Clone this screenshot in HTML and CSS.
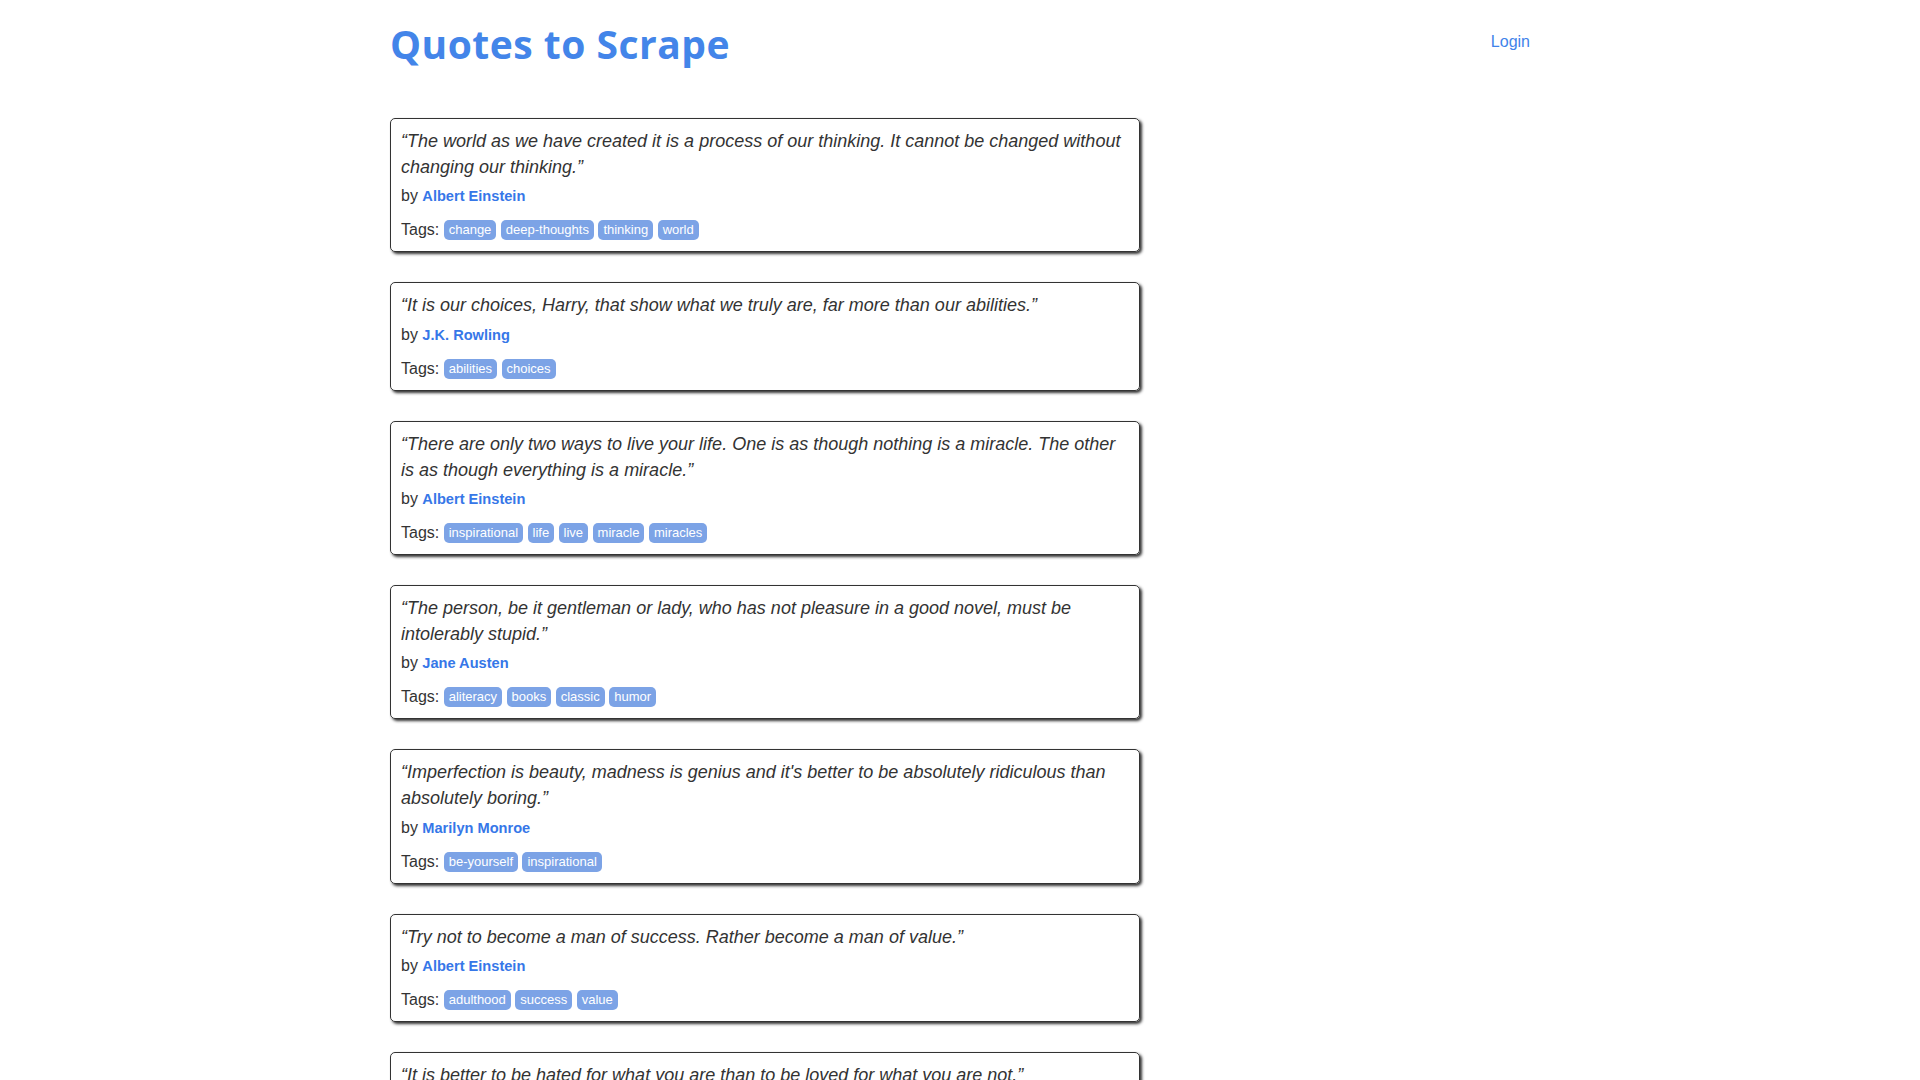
FILE: index.html
```html
<!DOCTYPE html>
<html lang="en">
<head>
<meta charset="utf-8">
<title>Quotes to Scrape</title>
<link rel="stylesheet" href="styles.css">
</head>
<body>
<div class="container">
  <header class="header-box">
    <h1 class="brand"><a href="#">Quotes to Scrape</a></h1>
    <p class="login"><a href="#">Login</a></p>
  </header>
  <main class="quotes">
    <div class="quote">
      <span class="text">“The world as we have created it is a process of our thinking. It cannot be changed without changing our thinking.”</span>
      <span>by <small class="author">Albert Einstein</small></span>
      <div class="tags">Tags: <a class="tag" href="#">change</a> <a class="tag" href="#">deep-thoughts</a> <a class="tag" href="#">thinking</a> <a class="tag" href="#">world</a></div>
    </div>
    <div class="quote">
      <span class="text">“It is our choices, Harry, that show what we truly are, far more than our abilities.”</span>
      <span>by <small class="author">J.K. Rowling</small></span>
      <div class="tags">Tags: <a class="tag" href="#">abilities</a> <a class="tag" href="#">choices</a></div>
    </div>
    <div class="quote">
      <span class="text">“There are only two ways to live your life. One is as though nothing is a miracle. The other is as though everything is a miracle.”</span>
      <span>by <small class="author">Albert Einstein</small></span>
      <div class="tags">Tags: <a class="tag" href="#">inspirational</a> <a class="tag" href="#">life</a> <a class="tag" href="#">live</a> <a class="tag" href="#">miracle</a> <a class="tag" href="#">miracles</a></div>
    </div>
    <div class="quote">
      <span class="text">“The person, be it gentleman or lady, who has not pleasure in a good novel, must be intolerably stupid.”</span>
      <span>by <small class="author">Jane Austen</small></span>
      <div class="tags">Tags: <a class="tag" href="#">aliteracy</a> <a class="tag" href="#">books</a> <a class="tag" href="#">classic</a> <a class="tag" href="#">humor</a></div>
    </div>
    <div class="quote">
      <span class="text">“Imperfection is beauty, madness is genius and it's better to be absolutely ridiculous than absolutely boring.”</span>
      <span>by <small class="author">Marilyn Monroe</small></span>
      <div class="tags">Tags: <a class="tag" href="#">be-yourself</a> <a class="tag" href="#">inspirational</a></div>
    </div>
    <div class="quote">
      <span class="text">“Try not to become a man of success. Rather become a man of value.”</span>
      <span>by <small class="author">Albert Einstein</small></span>
      <div class="tags">Tags: <a class="tag" href="#">adulthood</a> <a class="tag" href="#">success</a> <a class="tag" href="#">value</a></div>
    </div>
    <div class="quote">
      <span class="text">“It is better to be hated for what you are than to be loved for what you are not.”</span>
      <span>by <small class="author">André Gide</small></span>
      <div class="tags">Tags: <a class="tag" href="#">life</a> <a class="tag" href="#">love</a></div>
    </div>
    <div class="quote">
      <span class="text">“I have not failed. I've just found 10,000 ways that won't work.”</span>
      <span>by <small class="author">Thomas A. Edison</small></span>
      <div class="tags">Tags: <a class="tag" href="#">edison</a> <a class="tag" href="#">failure</a> <a class="tag" href="#">inspirational</a> <a class="tag" href="#">paraphrased</a></div>
    </div>
  </main>
</div>
</body>
</html>
```
FILE: styles.css
```css
* {
  box-sizing: border-box;
}

body {
  margin: 0;
  font-family: "Liberation Sans", Arial, Helvetica, sans-serif;
  font-size: 16px;
  line-height: 1.42857;
  color: #333333;
  background: #ffffff;
}

.container {
  width: 1170px;
  margin: 0 auto;
  padding: 0 15px;
}

.header-box {
  display: flex;
  justify-content: space-between;
  align-items: flex-start;
}

.brand {
  margin: 22px 0 52px;
  font-family: "Open Sans", "Lato", sans-serif;
  font-weight: 700;
  font-size: 39px;
  line-height: 44px;
  letter-spacing: 0.5px;
}

.brand a {
  color: #4385E9;
  text-decoration: none;
}

.login {
  margin: 31px 0 0;
}

.login a {
  color: #3F83EA;
  text-decoration: none;
}

.quotes {
  width: 750px;
}

.quote {
  padding: 10px;
  margin-bottom: 30px;
  border: 1px solid #333333;
  border-radius: 5px;
  box-shadow: 2px 2px 3px #333333;
}

.text {
  display: block;
  margin-bottom: 5px;
  font-size: 18px;
  font-style: italic;
  line-height: 1.42857;
}

.author {
  font-size: 14.6px;
  font-weight: bold;
  color: #3677E8;
}

.tags {
  margin-top: 11px;
  height: 22px;
  line-height: 22px;
}

.tag {
  display: inline-block;
  padding: 0 5px;
  border-radius: 5px;
  font-size: 13px;
  line-height: 20px;
  color: #ffffff;
  background-color: #7CA3E6;
  text-decoration: none;
  vertical-align: 1px;
}
```
